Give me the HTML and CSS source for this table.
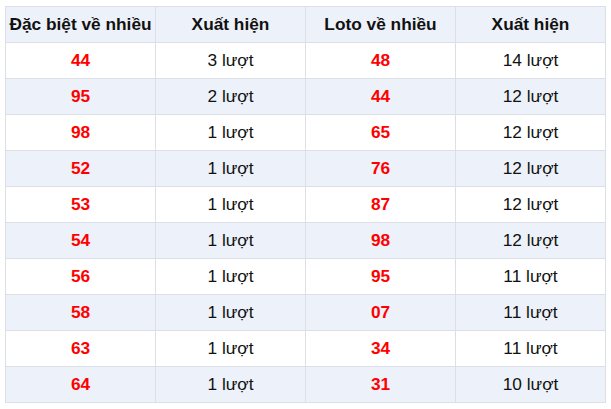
FILE: index.html
```html
<!DOCTYPE html>
<html lang="vi">
<head>
<meta charset="utf-8">
<link rel="stylesheet" href="styles.css">
</head>
<body>
<table class="stats">
  <thead>
    <tr><th>Đặc biệt về nhiều</th><th>Xuất hiện</th><th>Loto về nhiều</th><th>Xuất hiện</th></tr>
  </thead>
  <tbody>
    <tr><td class="num">44</td><td>3 lượt</td><td class="num">48</td><td>14 lượt</td></tr>
    <tr><td class="num">95</td><td>2 lượt</td><td class="num">44</td><td>12 lượt</td></tr>
    <tr><td class="num">98</td><td>1 lượt</td><td class="num">65</td><td>12 lượt</td></tr>
    <tr><td class="num">52</td><td>1 lượt</td><td class="num">76</td><td>12 lượt</td></tr>
    <tr><td class="num">53</td><td>1 lượt</td><td class="num">87</td><td>12 lượt</td></tr>
    <tr><td class="num">54</td><td>1 lượt</td><td class="num">98</td><td>12 lượt</td></tr>
    <tr><td class="num">56</td><td>1 lượt</td><td class="num">95</td><td>11 lượt</td></tr>
    <tr><td class="num">58</td><td>1 lượt</td><td class="num">07</td><td>11 lượt</td></tr>
    <tr><td class="num">63</td><td>1 lượt</td><td class="num">34</td><td>11 lượt</td></tr>
    <tr><td class="num">64</td><td>1 lượt</td><td class="num">31</td><td>10 lượt</td></tr>
  </tbody>
</table>
</body>
</html>
```
FILE: styles.css
```css
html, body {
  margin: 0;
  padding: 0;
  background: #fff;
}
body {
  padding: 6px 5px;
  font-family: "Liberation Sans", Arial, sans-serif;
  font-size: 17.3px;
  color: #111;
}
.stats {
  border-collapse: collapse;
  width: 601px;
  table-layout: fixed;
}
.stats th, .stats td {
  border: 1px solid #dcdfe6;
  height: 35px;
  padding: 0;
  text-align: center;
  vertical-align: middle;
}
.stats th {
  font-weight: bold;
  background: #edf1f9;
  white-space: nowrap;
}
.stats tbody tr:nth-child(even) td {
  background: #edf1f9;
}
.stats td.num {
  color: #ff0000;
  font-weight: bold;
}
```
